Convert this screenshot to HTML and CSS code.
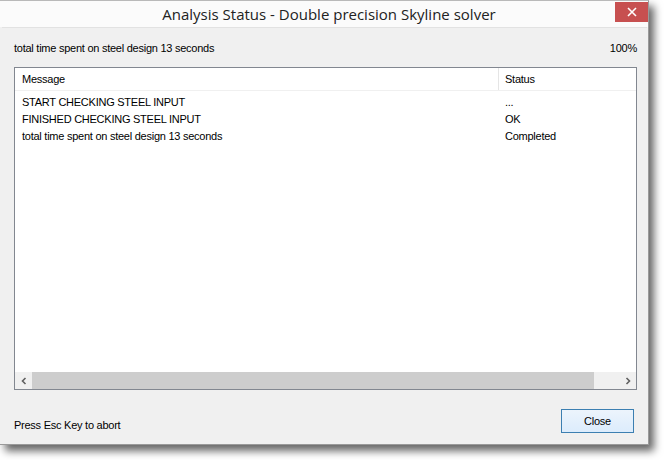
FILE: index.html
```html
<!DOCTYPE html>
<html>
<head>
<meta charset="utf-8">
<link rel="stylesheet" href="styles.css">
</head>
<body>
<div class="stage">
  <div class="window">
    <div class="titlebar">
      <div class="title">Analysis Status - Double precision Skyline solver</div>
      <div class="closebtn"><svg width="10" height="10" viewBox="0 0 10 10"><path d="M1 1 L9 9 M9 1 L1 9" stroke="#fff" stroke-width="1.6"/></svg></div>
    </div>
    <div class="body">
      <div class="statusline">
        <span>total time spent on steel design 13 seconds</span>
        <span>100%</span>
      </div>
      <div class="listbox">
        <div class="header">
          <div class="col-msg">Message</div>
          <div class="col-status">Status</div>
        </div>
        <div class="rows">
          <div class="row"><div class="col-msg">START CHECKING STEEL INPUT</div><div class="col-status">...</div></div>
          <div class="row"><div class="col-msg">FINISHED CHECKING STEEL INPUT</div><div class="col-status">OK</div></div>
          <div class="row"><div class="col-msg">total time spent on steel design 13 seconds</div><div class="col-status">Completed</div></div>
        </div>
        <div class="hscroll">
          <div class="arrow"><svg width="8" height="8" viewBox="0 0 8 8"><path d="M5.5 1 L2.5 4 L5.5 7" fill="none" stroke="#606060" stroke-width="1.6"/></svg></div>
          <div class="thumb"></div>
          <div class="track"></div>
          <div class="arrow"><svg width="8" height="8" viewBox="0 0 8 8"><path d="M2.5 1 L5.5 4 L2.5 7" fill="none" stroke="#606060" stroke-width="1.6"/></svg></div>
        </div>
      </div>
      <div class="footer">
        <span class="hint">Press Esc Key to abort</span>
        <button class="btn">Close</button>
      </div>
    </div>
  </div>
</div>
</body>
</html>
```
FILE: styles.css
```css
html, body {
  margin: 0;
  padding: 0;
  background: #ffffff;
}
.stage {
  width: 664px;
  height: 460px;
  padding: 0;
  box-sizing: border-box;
}
.window {
  width: 649px;
  height: 445px;
  box-sizing: border-box;
  border-top: 1px solid #b9b9b9;
  border-right: 1px solid #9a9a9a;
  border-bottom: 1px solid #9a9a9a;
  background: #f0f0f0;
  box-shadow: 5px 6px 8px rgba(0,0,0,0.6);
  display: flex;
  flex-direction: column;
  font-family: "Liberation Sans", Arial, sans-serif;
  font-size: 11px;
  letter-spacing: -0.25px;
  color: #000;
}
.titlebar {
  height: 26px;
  flex: none;
  background: #fbfbfb;
  position: relative;
  display: flex;
  justify-content: center;
  align-items: center;
}
.title {
  font-family: "Open Sans", "DejaVu Sans", sans-serif;
  font-size: 15px;
  letter-spacing: 0;
  color: #222;
  margin-left: 10px;
  margin-top: -1px;
}
.closebtn {
  position: absolute;
  right: 0;
  top: 1px;
  width: 33px;
  height: 20px;
  background: #c75050;
  display: flex;
  align-items: center;
  justify-content: center;
}
.body {
  flex: 1;
  display: flex;
  flex-direction: column;
  padding: 0 10px 0 12px;
  border-top: 1px solid #e2e2e2;
  margin: 0 1px 2px 2px;
  background: #f0f0f0;
}
.statusline {
  display: flex;
  justify-content: space-between;
  height: 39px;
  align-items: center;
}
.listbox {
  height: 323px;
  box-sizing: border-box;
  border: 1px solid #828790;
  background: #fff;
  display: flex;
  flex-direction: column;
}
.header {
  display: flex;
  height: 22px;
  align-items: center;
  border-bottom: 1px solid #f0f0f0;
}
.header .col-msg {
  border-right: 1px solid #e5e5e5;
  height: 100%;
  display: flex;
  align-items: center;
}
.col-msg {
  width: 476px;
  padding-left: 7px;
  flex: none;
}
.col-status {
  padding-left: 6px;
}
.rows {
  flex: 1;
  padding-top: 2px;
}
.row {
  display: flex;
  height: 17px;
  align-items: center;
}
.row .col-status {
  padding-left: 7px;
}
.hscroll {
  height: 17px;
  display: flex;
  background: #f0f0f0;
}
.arrow {
  width: 17px;
  flex: none;
  display: flex;
  align-items: center;
  justify-content: center;
}
.thumb {
  width: 562px;
  flex: none;
  background: #cdcdcd;
}
.track {
  flex: 1;
}
.footer {
  flex: 1;
  display: flex;
  align-items: flex-end;
  justify-content: space-between;
  padding-bottom: 9px;
}
.hint {
  padding-bottom: 2px;
}
.btn {
  width: 73px;
  height: 24px;
  margin-right: 3px;
  border: 1px solid #3c7fb1;
  background: linear-gradient(#ecf4fc, #dcecfc);
  font-family: "Liberation Sans", Arial, sans-serif;
  font-size: 11px;
  letter-spacing: -0.25px;
  color: #000;
  padding: 0;
}
```
